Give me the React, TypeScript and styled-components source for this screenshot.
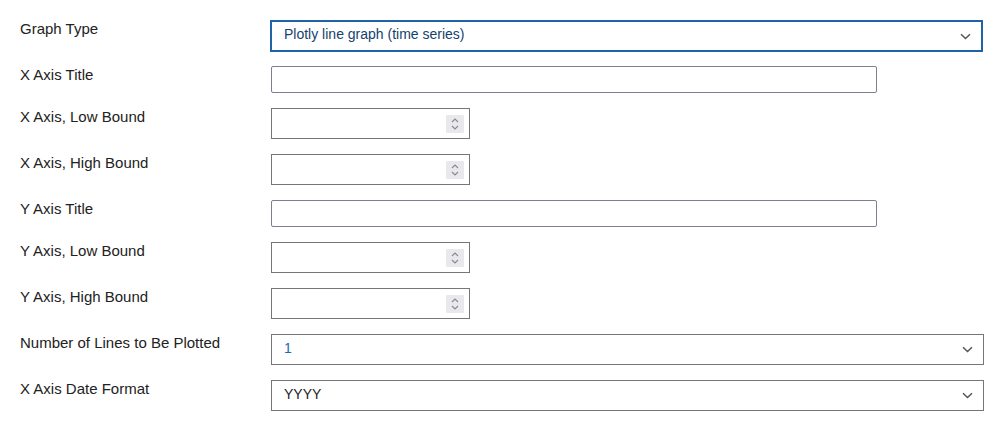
import React from "react";
import styled, { createGlobalStyle } from "styled-components";

const GlobalStyle = createGlobalStyle`
  html, body {
    margin: 0;
    padding: 0;
    background: #fff;
  }
  body {
    font-family: "Liberation Sans", Arial, Helvetica, sans-serif;
    color: #222;
  }
`;

const Form = styled.div`
  padding: 20px 18px 0 20px;
  display: flex;
  flex-direction: column;
  gap: 15px;
`;

const Row = styled.div`
  display: grid;
  grid-template-columns: 251px 1fr;
  align-items: start;
`;

const Label = styled.label`
  font-size: 15px;
  line-height: 18px;
  color: #222;
`;

const SelectBox = styled.div<{ $focused?: boolean }>`
  box-sizing: border-box;
  height: ${({ $focused }) => ($focused ? "32px" : "31px")};
  width: 713px;
  display: flex;
  align-items: center;
  justify-content: space-between;
  padding: 0 10px 0 12px;
  border: ${({ $focused }) => ($focused ? "2px solid #2062a6" : "1px solid #767676")};
  margin: ${({ $focused }) => ($focused ? "0 0 -1px -1px" : "0")};
  background: #fff;
`;

const SelectText = styled.span<{ $color: string }>`
  font-size: 14px;
  line-height: 16px;
  margin-bottom: 4px;
  color: ${({ $color }) => $color};
`;

const TextInput = styled.div`
  box-sizing: border-box;
  width: 606px;
  height: 27px;
  border: 1px solid #807d8f;
  border-radius: 2px;
  background: #fff;
`;

const NumberInput = styled.div`
  box-sizing: border-box;
  width: 199px;
  height: 31px;
  border: 1px solid #767676;
  background: #fff;
  display: flex;
  align-items: center;
  justify-content: flex-end;
  padding-right: 5px;
`;

const Spinner = styled.div`
  width: 18px;
  height: 18px;
  background: #e9e9ed;
  border-radius: 1px;
  display: flex;
  align-items: center;
  justify-content: center;
`;

const Chevron = () => (
  <svg width="11" height="7" viewBox="0 0 11 7">
    <path d="M1 1.2 L5.5 5.5 L10 1.2" fill="none" stroke="#555" strokeWidth="1.5" />
  </svg>
);

const SpinIcon = () => (
  <svg width="10" height="14" viewBox="0 0 10 14">
    <path d="M2 5 L5 2 L8 5" fill="none" stroke="#8a8a94" strokeWidth="1.2" />
    <path d="M2 9 L5 12 L8 9" fill="none" stroke="#8a8a94" strokeWidth="1.2" />
  </svg>
);

type Field =
  | { label: string; kind: "select"; value: string; color: string; focused?: boolean }
  | { label: string; kind: "text" }
  | { label: string; kind: "number" };

const fields: Field[] = [
  { label: "Graph Type", kind: "select", value: "Plotly line graph (time series)", color: "#163f6e", focused: true },
  { label: "X Axis Title", kind: "text" },
  { label: "X Axis, Low Bound", kind: "number" },
  { label: "X Axis, High Bound", kind: "number" },
  { label: "Y Axis Title", kind: "text" },
  { label: "Y Axis, Low Bound", kind: "number" },
  { label: "Y Axis, High Bound", kind: "number" },
  { label: "Number of Lines to Be Plotted", kind: "select", value: "1", color: "#2267b5" },
  { label: "X Axis Date Format", kind: "select", value: "YYYY", color: "#222" },
];

export default function App() {
  return (
    <>
      <GlobalStyle />
      <Form>
        {fields.map((f) => (
          <Row key={f.label}>
            <Label>{f.label}</Label>
            {f.kind === "select" && (
              <SelectBox $focused={f.focused}>
                <SelectText $color={f.color}>{f.value}</SelectText>
                <Chevron />
              </SelectBox>
            )}
            {f.kind === "text" && <TextInput />}
            {f.kind === "number" && (
              <NumberInput>
                <Spinner>
                  <SpinIcon />
                </Spinner>
              </NumberInput>
            )}
          </Row>
        ))}
      </Form>
    </>
  );
}
